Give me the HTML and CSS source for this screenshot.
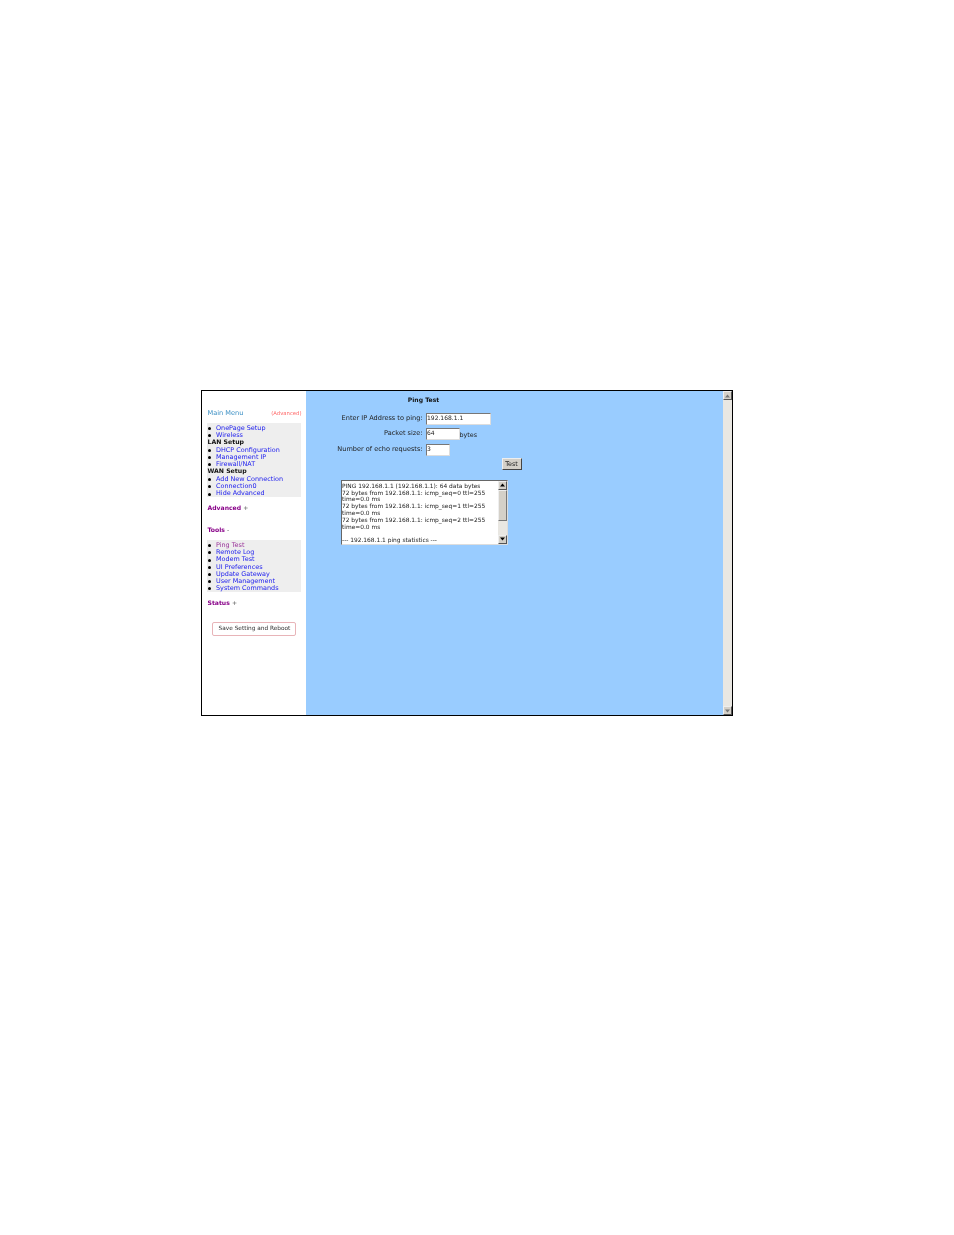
FILE: index.html
```html
<!DOCTYPE html>
<html lang="en">
<head>
	<meta charset="UTF-8">
	<title>Ping Test</title>
	<link rel="stylesheet" href="styles.css">
</head>
<body>
	<div class="frame">
		<div class="side">
			<div class="menuhead">
				<span class="mainmenu">Main Menu</span>
				<span class="adv">(Advanced)</span>
			</div>
			<div class="box first">
				<div class="item"><a>OnePage Setup</a></div>
				<div class="item"><a>Wireless</a></div>
				<div class="group">LAN Setup</div>
				<div class="item"><a>DHCP Configuration</a></div>
				<div class="item"><a>Management IP</a></div>
				<div class="item"><a>Firewall/NAT</a></div>
				<div class="group">WAN Setup</div>
				<div class="item"><a>Add New Connection</a></div>
				<div class="item"><a>Connection0</a></div>
				<div class="item"><a>Hide Advanced</a></div>
			</div>
			<div class="sect advanced">Advanced <span>+</span></div>
			<div class="sect tools">Tools <span>-</span></div>
			<div class="box second">
				<div class="item"><a class="visited">Ping Test</a></div>
				<div class="item"><a>Remote Log</a></div>
				<div class="item"><a>Modem Test</a></div>
				<div class="item"><a>UI Preferences</a></div>
				<div class="item"><a>Update Gateway</a></div>
				<div class="item"><a>User Management</a></div>
				<div class="item"><a>System Commands</a></div>
			</div>
			<div class="sect status">Status <span>+</span></div>
			<div class="savebtn">Save Setting and Reboot</div>
		</div>
		<div class="main">
			<div class="title">Ping Test</div>
			<div class="row first-row">
				<label>Enter IP Address to ping:</label>
				<div class="field ip">192.168.1.1</div>
			</div>
			<div class="row">
				<label>Packet size:</label>
				<div class="field size">64</div>
				<span class="unit">bytes</span>
			</div>
			<div class="row">
				<label>Number of echo requests:</label>
				<div class="field count">3</div>
			</div>
			<div class="testbtn">Test</div>
			<div class="output">
				<div class="lines">
					<div>PING 192.168.1.1 (192.168.1.1): 64 data bytes</div>
					<div>72 bytes from 192.168.1.1: icmp_seq=0 ttl=255</div>
					<div>time=0.0 ms</div>
					<div>72 bytes from 192.168.1.1: icmp_seq=1 ttl=255</div>
					<div>time=0.0 ms</div>
					<div>72 bytes from 192.168.1.1: icmp_seq=2 ttl=255</div>
					<div>time=0.0 ms</div>
					<div>&nbsp;</div>
					<div>--- 192.168.1.1 ping statistics ---</div>
				</div>
				<div class="bar small">
					<div class="arrow up"><svg width="5" height="4" viewBox="0 0 5 4"><path d="M2.5 0.5L5 3.5H0z" fill="#000"/></svg></div>
					<div class="thumb"></div>
					<div class="track"></div>
					<div class="arrow"><svg width="5" height="4" viewBox="0 0 5 4"><path d="M0 0.5H5L2.5 3.5z" fill="#000"/></svg></div>
				</div>
			</div>
		</div>
		<div class="bar page">
			<div class="arrow"><svg width="5" height="4" viewBox="0 0 5 4"><path d="M2.5 0.5L5 3.5H0z" fill="#777"/></svg></div>
			<div class="track"></div>
			<div class="arrow"><svg width="5" height="4" viewBox="0 0 5 4"><path d="M0 0.5H5L2.5 3.5z" fill="#777"/></svg></div>
		</div>
	</div>
</body>
</html>
```

FILE: styles.css
```css
html,body{
	margin:0;
	background:#fff;
}
body{
	padding:390px 0 0 201px;
	height:845px;
	box-sizing:border-box;
	font-family:"DejaVu Sans",sans-serif;
	font-size:6.4px;
	line-height:7.2px;
	color:#222;
	text-rendering:geometricPrecision;
}
.frame{
	display:flex;
	width:532px;
	height:326px;
	box-sizing:border-box;
	border:1.5px solid #000;
	background:#fff;
	filter:blur(.3px);
}
.side{
	width:103.5px;
	flex:none;
	padding:19px 5px 0 5px;
	box-sizing:border-box;
}
.menuhead{
	display:flex;
	justify-content:space-between;
	align-items:baseline;
	height:10px;
}
.mainmenu{
	margin-left:.5px;
	font-size:6.6px;
	color:#3a8fc4;
}
.adv{
	margin-right:-1px;
	font-size:5.3px;
	color:#f66;
}
.box{
	background:#eee;
}
.box.first{
	margin-top:3px;
	height:74px;
	padding-top:1.7px;
	box-sizing:border-box;
	line-height:7.3px;
}
.box.second{
	margin-top:6px;
	height:52px;
	padding-top:1.6px;
	box-sizing:border-box;
}
.item{
	display:flex;
	align-items:center;
	font-size:6.45px;
	white-space:nowrap;
}
.item:before{
	content:"";
	width:3px;
	height:3px;
	margin:0 5px 0 1px;
	border-radius:50%;
	background:#000;
}
.item a{
	color:#22e;
}
.item a.visited{
	color:#939;
}
.group{
	padding-left:.5px;
	font-size:6.2px;
	font-weight:bold;
	color:#111;
}
.sect{
	padding-left:.5px;
	font-size:6.1px;
	font-weight:bold;
	color:#808;
}
.sect span{
	font-weight:normal;
	color:#555;
}
.advanced{
	margin-top:8px;
}
.tools{
	margin-top:15px;
}
.status{
	margin-top:8px;
}
.savebtn{
	width:84px;
	height:14.5px;
	margin:14px 0 0 5px;
	padding-left:1px;
	box-sizing:border-box;
	border:1px solid #e8b4b8;
	border-radius:2px;
	font-size:5.8px;
	line-height:13px;
	text-align:center;
	color:#333;
	background:#fff;
}
.main{
	flex:1;
	background:#9cf;
	padding-top:6px;
}
.title{
	width:236px;
	text-align:center;
	font-size:6.1px;
	font-weight:bold;
	color:#111;
}
.row{
	display:flex;
	align-items:center;
	height:14px;
	margin-top:1.5px;
}
.first-row{
	margin-top:7.3px;
}
.row label{
	width:120px;
	padding-right:3px;
	box-sizing:border-box;
	font-size:6.55px;
	text-align:right;
}
.field{
	height:12px;
	box-sizing:border-box;
	border:1px solid;
	border-color:#777 #ddd #ddd #777;
	background:#fff;
	padding-left:.5px;
	font-size:6px;
	line-height:10px;
}
.ip{
	width:65px;
}
.size{
	width:34px;
}
.count{
	width:24px;
}
.unit{
	padding-top:3px;
}
.testbtn{
	width:20px;
	height:12px;
	margin:1.3px 0 0 196px;
	box-sizing:border-box;
	border:1px solid;
	border-color:#eee #444 #444 #eee;
	background:#d4d0c8;
	line-height:10px;
	text-align:center;
}
.output{
	display:flex;
	width:167px;
	height:65px;
	margin:10.2px 0 0 35px;
	box-sizing:border-box;
	border:1px solid;
	border-color:#666 #ddd #ddd #666;
	background:#fff;
	overflow:hidden;
}
.lines{
	flex:1;
	padding:2.8px 0 0 .5px;
	font-size:5.9px;
	line-height:6.8px;
	white-space:nowrap;
	overflow:hidden;
}
.bar{
	display:flex;
	flex-direction:column;
	flex:none;
	width:9px;
	background:#e9e7e2;
}
.arrow{
	display:flex;
	align-items:center;
	justify-content:center;
	height:9px;
	flex:none;
	box-sizing:border-box;
	background:#d4d0c8;
	border:1px solid;
	border-color:#eee #555 #555 #eee;
}
.track{
	flex:1;
}
.thumb{
	height:31px;
	flex:none;
	box-sizing:border-box;
	background:#d4d0c8;
	border:1px solid;
	border-color:#eee #777 #777 #eee;
}
```
